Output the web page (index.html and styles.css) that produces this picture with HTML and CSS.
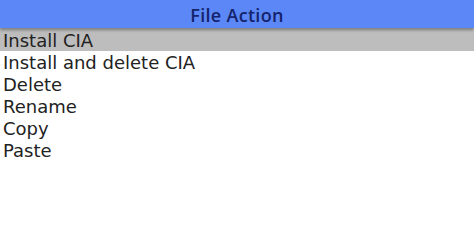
FILE: index.html
```html
<!DOCTYPE html>
<html>
<head>
<meta charset="utf-8">
<link rel="stylesheet" href="styles.css">
</head>
<body>
<div class="screen">
  <div class="header">File Action</div>
  <ul class="menu">
    <li class="item selected">Install CIA</li>
    <li class="item">Install and delete CIA</li>
    <li class="item">Delete</li>
    <li class="item">Rename</li>
    <li class="item">Copy</li>
    <li class="item">Paste</li>
  </ul>
</div>
</body>
</html>
```
FILE: styles.css
```css
html, body {
  margin: 0;
  padding: 0;
  background: #ffffff;
}
.screen {
  width: 474px;
  height: 224px;
  display: flex;
  flex-direction: column;
  font-family: "DejaVu Sans", sans-serif;
}
.header {
  height: 28px;
  background: #5b88f6;
  color: #14236b;
  font-family: "Open Sans", sans-serif;
  font-weight: 600;
  font-size: 18px;
  letter-spacing: 0.3px;
  line-height: 30px;
  text-align: center;
  position: relative;
  z-index: 1;
  box-shadow: 0 2px 3px rgba(0, 0, 0, 0.35);
}
.menu {
  list-style: none;
  margin: 0;
  padding: 2px 0 0 0;
  display: flex;
  flex-direction: column;
}
.item {
  height: 22px;
  line-height: 24px;
  padding-left: 3px;
  font-size: 18px;
  color: #222222;
}
.selected {
  background: #bdbdbd;
  margin-top: -2px;
  height: 23px;
  line-height: 25px;
}
```
